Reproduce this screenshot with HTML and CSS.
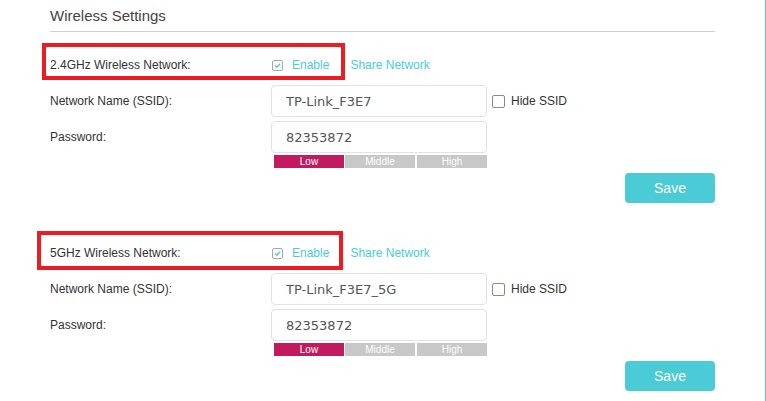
FILE: index.html
```html
<!DOCTYPE html>
<html lang="en">
<head>
    <meta charset="UTF-8">
    <meta name="viewport" content="width=device-width, initial-scale=1.0">
    <title>Wireless Settings</title>
    <link rel="stylesheet" href="styles.css">
</head>
<body>
    <div class="page">
        <div class="panel">
            <h2 class="panel-title">Wireless Settings</h2>

            <section class="band">
                <div class="row row-enable">
                    <span class="mark mark-24"></span>
                    <label class="row-label">2.4GHz Wireless Network:</label>
                    <div class="row-field">
                        <span class="check check-on"><svg width="11" height="11" viewBox="0 0 11 11"><rect x="0.5" y="0.5" width="10" height="10" rx="1.5" fill="#fff" stroke="#a8a8a8"/><path d="M3 5.6 L4.8 7.3 L8.1 3.8" fill="none" stroke="#4acbd6" stroke-width="1.4"/></svg></span>
                        <span class="link">Enable</span>
                        <span class="link share">Share Network</span>
                    </div>
                </div>
                <div class="row">
                    <label class="row-label">Network Name (SSID):</label>
                    <div class="row-field">
                        <input class="text-input" type="text" value="TP-Link_F3E7">
                        <span class="check check-box"></span>
                        <span class="check-text">Hide SSID</span>
                    </div>
                </div>
                <div class="row row-pass">
                    <label class="row-label">Password:</label>
                    <div class="row-field">
                        <input class="text-input" type="text" value="82353872">
                    </div>
                </div>
                <div class="strength">
                    <span class="lvl lvl-on">Low</span>
                    <span class="lvl">Middle</span>
                    <span class="lvl">High</span>
                </div>
                <div class="actions"><button class="btn-save">Save</button></div>
            </section>

            <section class="band">
                <div class="row row-enable">
                    <span class="mark mark-5"></span>
                    <label class="row-label">5GHz Wireless Network:</label>
                    <div class="row-field">
                        <span class="check check-on"><svg width="11" height="11" viewBox="0 0 11 11"><rect x="0.5" y="0.5" width="10" height="10" rx="1.5" fill="#fff" stroke="#a8a8a8"/><path d="M3 5.6 L4.8 7.3 L8.1 3.8" fill="none" stroke="#4acbd6" stroke-width="1.4"/></svg></span>
                        <span class="link">Enable</span>
                        <span class="link share">Share Network</span>
                    </div>
                </div>
                <div class="row">
                    <label class="row-label">Network Name (SSID):</label>
                    <div class="row-field">
                        <input class="text-input" type="text" value="TP-Link_F3E7_5G">
                        <span class="check check-box"></span>
                        <span class="check-text">Hide SSID</span>
                    </div>
                </div>
                <div class="row row-pass">
                    <label class="row-label">Password:</label>
                    <div class="row-field">
                        <input class="text-input" type="text" value="82353872">
                    </div>
                </div>
                <div class="strength">
                    <span class="lvl lvl-on">Low</span>
                    <span class="lvl">Middle</span>
                    <span class="lvl">High</span>
                </div>
                <div class="actions"><button class="btn-save">Save</button></div>
            </section>
        </div>
    </div>
</body>
</html>
```

FILE: styles.css
```css
* { margin: 0; padding: 0; box-sizing: border-box; }
body {
    font-family: "Liberation Sans", Arial, sans-serif;
    font-size: 12px;
    color: #333;
    background: #fff;
}
.page {
    width: 766px;
    min-height: 100vh;
    border-right: 1px solid #4acbd6;
    overflow: hidden;
}
.panel { width: 715px; padding-left: 50px; }
.panel-title {
    font-size: 15px;
    font-weight: normal;
    line-height: 18px;
    color: #444;
    padding: 7px 0 6px;
    border-bottom: 1px solid #d0d0d0;
}
.band { padding-top: 16px; }
.band + .band { margin-top: 17px; }
.row { display: flex; align-items: center; height: 32px; position: relative; }
.row + .row { margin-top: 5px; }
.row-pass { margin-top: 4px !important; }
.row-enable { line-height: 32px; }
.row-enable .row-label, .row-enable .row-field { padding-top: 2px; }
.row-label { width: 221px; flex-shrink: 0; }
.row-field { display: flex; align-items: center; height: 100%; }
.mark { position: absolute; border: 4px solid #ec1c24; pointer-events: none; }
.mark-24 { left: -8px; top: -5px; width: 303px; height: 37px; }
.mark-5 { left: -13px; top: -5px; width: 306px; height: 39px; }
.check { display: inline-flex; }
.check-on { margin-left: 1px; margin-right: 9px; }
.check-on svg { display: block; }
.link { color: #4acbd6; }
.share { margin-left: 21px; }
.text-input {
    width: 216px;
    height: 32px;
    border: 1px solid #e2e2e2;
    border-radius: 4px;
    padding: 0 14px;
    font-family: "DejaVu Sans", Verdana, sans-serif;
    font-size: 13px;
    color: #555;
    outline: none;
    background: #fff;
}
.check-box {
    width: 13px;
    height: 13px;
    border: 1px solid #8a8a8a;
    border-radius: 2px;
    margin: 0 6px 0 5px;
}
.check-text { color: #333; }
.strength { display: flex; gap: 1px; margin: 2px 0 0 224px; }
.lvl {
    width: 70px;
    height: 13px;
    line-height: 13px;
    background: #c8c8c8;
    color: #fff;
    font-size: 10px;
    text-align: center;
}
.lvl + .lvl + .lvl { margin-left: 1px; }
.lvl-on { background: #c21a5e; }
.actions { display: flex; justify-content: flex-end; margin-top: 5px; }
.btn-save {
    width: 90px;
    height: 30px;
    border: none;
    border-radius: 4px;
    background: #4acbd6;
    color: #fff;
    font-family: "Liberation Sans", Arial, sans-serif;
    font-size: 14px;
}
```
